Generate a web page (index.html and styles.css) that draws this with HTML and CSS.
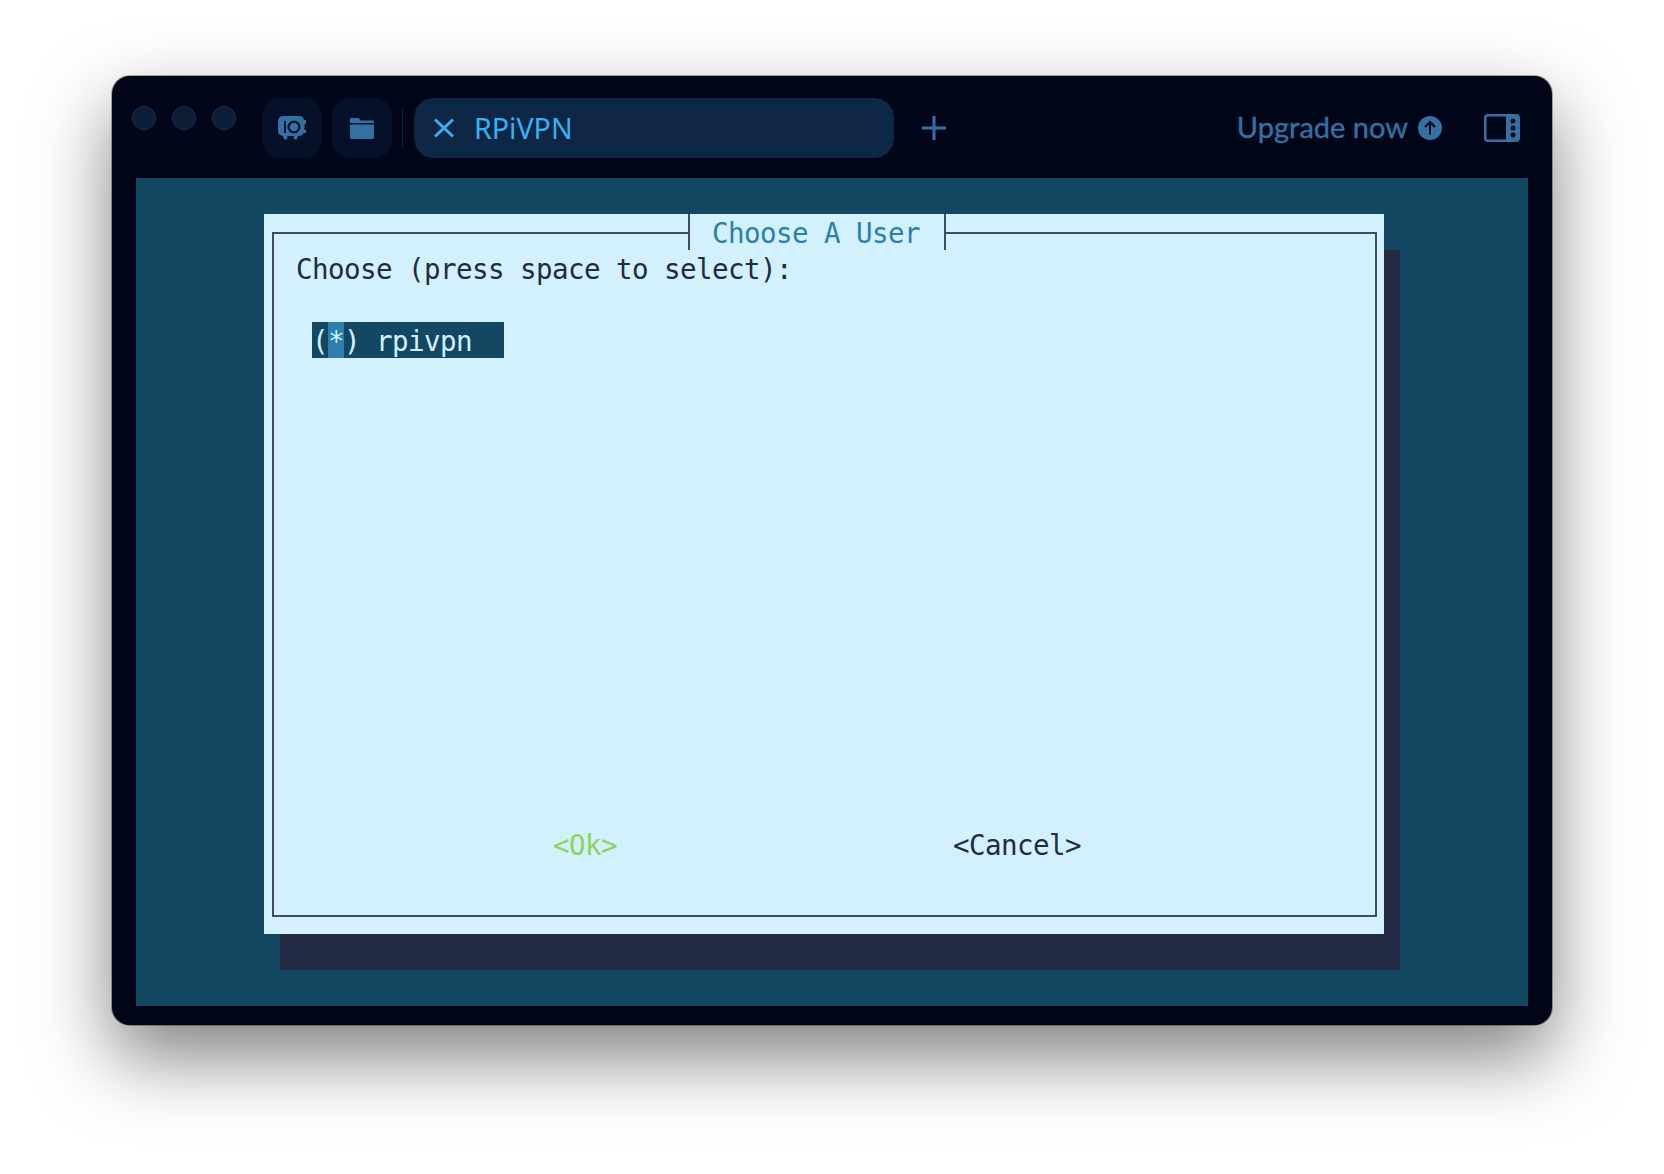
FILE: index.html
```html
<!DOCTYPE html>
<html lang="en">
<head>
<meta charset="utf-8">
<title>RPiVPN</title>
<link rel="stylesheet" href="styles.css">
</head>
<body>
<main class="window">
  <header class="titlebar">
    <div class="lights">
      <span class="light"></span><span class="light"></span><span class="light"></span>
    </div>
    <button class="tool">
      <svg class="tool-icon" viewBox="0 0 28 24" width="28" height="24">
        <path class="icon-fill" fill-rule="evenodd" d="M5 0H21a5 5 0 0 1 5 4h2V8H26.500v6H28v3h-2.500a5 5 0 0 1-4.500 3h-1l-1 3.500h-3L15.500 20h-6L9 23.500H6L5 20a5 5 0 0 1-5-5V5a5 5 0 0 1 5-5ZM6 5v12h2V5ZM16 4.500a6.500 6.500 0 1 0 0 13a6.500 6.500 0 0 0 0-13ZM16 6.700a4.300 4.300 0 1 1 0 8.600a4.300 4.300 0 0 1 0-8.600Z"/>
      </svg>
    </button>
    <button class="tool">
      <svg class="tool-icon" viewBox="0 0 24 21" width="24" height="21">
        <path class="icon-fill" d="M0 1a1 1 0 0 1 1-1h7.500l2.500 2.500h12a1 1 0 0 1 1 1V5H0ZM0 6.500h24V20a1 1 0 0 1-1 1H1a1 1 0 0 1-1-1Z"/>
      </svg>
    </button>
    <span class="divider"></span>
    <div class="tab">
      <svg class="tab-close" viewBox="0 0 22 20" width="22" height="20">
        <path d="M2 1.500 20 18.500M20 1.500 2 18.500"/>
      </svg>
      <span class="tab-title">RPiVPN</span>
    </div>
    <svg class="plus" viewBox="0 0 24 24" width="24" height="24">
      <path d="M12 0V24M0 12H24"/>
    </svg>
    <a class="upgrade"><span class="upgrade-text">Upgrade now</span>
      <svg class="upgrade-icon" viewBox="0 0 24 24" width="24" height="24">
        <circle class="icon-fill" cx="12" cy="12" r="12"/>
        <path d="M12 18.500V6M7 11l5-5 5 5"/>
      </svg>
    </a>
    <svg class="panel" viewBox="0 0 36 28" width="36" height="28">
      <path class="icon-fill" fill-rule="evenodd" d="M4 0H32a4 4 0 0 1 4 4V24a4 4 0 0 1-4 4H4a4 4 0 0 1-4-4V4a4 4 0 0 1 4-4ZM4 2.500A1.500 1.500 0 0 0 2.500 4V24A1.500 1.500 0 0 0 4 25.500H22V2.500ZM29 4.500a2.500 2.500 0 1 0 0 5a2.500 2.500 0 0 0 0-5ZM29 11.500a2.500 2.500 0 1 0 0 5a2.500 2.500 0 0 0 0-5ZM29 18.500a2.500 2.500 0 1 0 0 5a2.500 2.500 0 0 0 0-5Z"/>
    </svg>
  </header>
  <section class="terminal">
    <div class="dialog">
      <div class="frame">
        <div class="title"><span>Choose A User</span></div>
        <p class="prompt">Choose (press space to select):</p>
        <p class="item"><span>(</span><span class="cursor">*</span><span>) rpivpn</span></p>
        <div class="buttons">
          <span class="btn-ok">&lt;Ok&gt;</span>
          <span class="btn-cancel">&lt;Cancel&gt;</span>
        </div>
      </div>
    </div>
  </section>
</main>
</body>
</html>
```

FILE: styles.css
```css
* { box-sizing: border-box; }
html, body { margin: 0; height: 100%; }
body {
  background: #fff;
  display: flex;
  justify-content: center;
  align-items: flex-start;
  padding-top: 76px;
  overflow: hidden;
}
.window {
  width: 1440px;
  height: 949px;
  background: #000518;
  border-radius: 18px;
  padding: 0 24px;
  box-shadow: 0 0 0 1px rgba(0, 0, 0, .3), 0 32px 76px 0 rgba(0, 0, 0, .5);
  display: flex;
  flex-direction: column;
}
.titlebar {
  height: 102px;
  padding-top: 22px;
  display: flex;
  align-items: flex-start;
  font-family: Lato, sans-serif;
}
.lights { display: flex; gap: 16px; margin: 8px 26px 0 -4px; }
.light {
  width: 24px;
  height: 24px;
  border-radius: 50%;
  background: #0c1c34;
  border: 1px solid #17345a;
}
.tool {
  width: 60px;
  height: 60px;
  padding: 0;
  border: 0;
  border-radius: 18px;
  background: #061129;
  margin-right: 10px;
  display: flex;
  align-items: center;
  justify-content: center;
}
.icon-fill { fill: #3570a4; }
.divider {
  width: 1px;
  height: 40px;
  margin: 10px 11px 0 0;
  background: #0e2038;
}
.tab {
  width: 480px;
  height: 60px;
  border-radius: 20px;
  background: #0d2744;
  display: flex;
  align-items: center;
  padding-left: 19px;
}
.tab-close { fill: none; stroke: #37b0f6; stroke-width: 3; margin-right: 19px; }
.tab-title { font-family: "Noto Sans", sans-serif; font-size: 28.6px; color: #37b0f6; margin-bottom: 2px; }
.plus { fill: none; stroke: #3570a4; stroke-width: 3; margin: 18px 0 0 28px; }
.upgrade {
  margin-left: auto;
  display: flex;
  align-items: center;
  gap: 10px;
  height: 60px;
  color: #3570a4;
  font-size: 29px;
  -webkit-text-stroke: .4px #3570a4;
}
.upgrade-text { margin-bottom: 3px; }
.upgrade-icon path { fill: none; stroke: #000518; stroke-width: 2; }
.panel { margin: 16px 8px 0 42px; }
.terminal {
  height: 828px;
  background: #134863;
  padding: 36px 128px 0;
  font-family: "DejaVu Sans Mono", monospace;
  font-size: 27.5px;
  letter-spacing: -.555px;
  line-height: 38px;
}
.dialog {
  width: 1120px;
  height: 720px;
  background: #d2f1fd;
  box-shadow: 16px 36px 0 #232a44;
  padding: 18px 8px;
}
.frame {
  position: relative;
  height: 685px;
  width: 1105px;
  border: 2px solid #414d68;
  padding: 16px 22px 0;
  color: #232a44;
}
.title {
  position: absolute;
  top: -20px;
  left: 414px;
  width: 258px;
  height: 36px;
  background: #d2f1fd;
  border: solid #414d68;
  border-width: 0 2px;
  padding-left: 22px;
  color: #2a7fae;
}
.prompt, .item { margin: 0; white-space: pre; }
.prompt { height: 36px; }
.item {
  display: flex;
  width: 192px;
  height: 36px;
  margin: 36px 0 0 16px;
  background: #134863;
  color: #d2f1fd;
}
.cursor { width: 16px; background: #2a7fae; }
.buttons {
  position: absolute;
  top: 592px;
  left: 279px;
  display: flex;
  gap: 336px;
  width: 700px;
  white-space: pre;
}
.btn-ok { color: #8fd35f; }
```
